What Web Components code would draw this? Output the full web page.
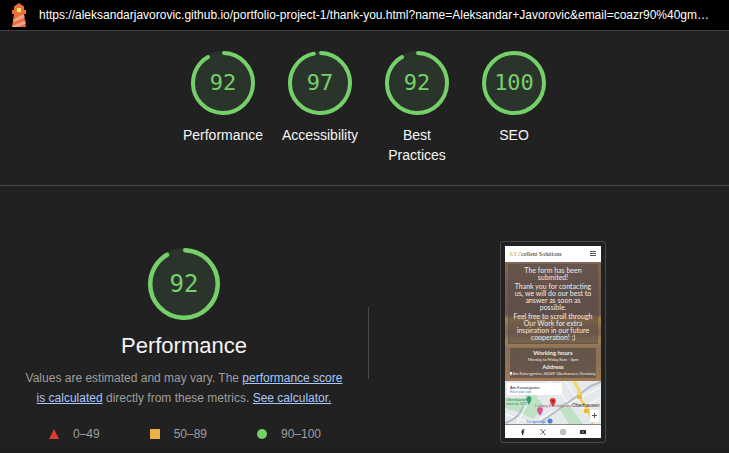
<!DOCTYPE html>
<html lang="en">
<head>
<meta charset="utf-8">
<title>Lighthouse Report</title>
<style>
html{background:#212121}
body{margin:0;background:#212121;color:#f5f5f5;font-family:"Liberation Sans",Arial,sans-serif;font-size:14px;line-height:20px}
</style>
</head>
<body>
<lh-report></lh-report>
<script>
const define = (name, html, setup) => customElements.define(name, class extends HTMLElement {
  connectedCallback() {
    if (this.shadowRoot) return;
    const t = document.createElement('template');
    t.innerHTML = html;
    this.attachShadow({mode: 'open'}).append(t.content.cloneNode(true));
    if (setup) setup(this, this.shadowRoot);
  }
});

define('lh-topbar', `
<style>
:host{display:flex;align-items:center;height:30px;padding:0 12px 0 8px;background:#000;border-bottom:1px solid #424242;font-size:12px}
svg{flex:none;width:22px;height:26px;margin-right:9px}
a{color:#fff;text-decoration:none;white-space:nowrap;overflow:hidden;text-overflow:ellipsis;min-width:0}
</style>
<svg viewBox="0 0 22 26" aria-hidden="true">
<path fill="#e8703c" d="M11 1l5 3.500V8h2v4h-2l2 13H4l2-13H4V8h2V4.500z"/>
<path fill="#f0a385" d="M5.600 17.500L14 13h2.200l.3 2.600L5.200 20.500zM4.400 24l12.800-5.500.4 3.200L10 25H4z"/>
<path fill="#ffe75c" d="M9 6h4v4H9z"/>
</svg>
<a href="https://aleksandarjavorovic.github.io/portfolio-project-1/thank-you.html"><slot></slot></a>`);

define('lh-gauge', `
<style>
:host{display:flex;flex-direction:column;align-items:center;width:81px;text-align:center;color:#f5f5f5}
.dial{display:grid;place-items:center;width:64px;height:64px;color:#75d06a;font:22px/28px "DejaVu Sans Mono",monospace}
.dial>*{grid-area:1/1}
svg{width:100%;height:100%}
circle{fill:#2b342b}
.arc{fill:none;stroke:#75d06a;stroke-linecap:round}
.label{margin-top:10px}
:host([large]){width:auto}
:host([large]) .dial{width:72px;height:72px;font-size:24px}
:host([large]) .label{margin-top:12px;font-size:22px;line-height:28px}
</style>
<div class="dial"><svg viewBox="0 0 64 64" aria-hidden="true"><circle cx="32" cy="32" r="32"/><circle class="arc" cx="32" cy="32" r="30" stroke-width="4"/></svg><span class="score"></span></div>
<div class="label"><slot></slot></div>`, (host, root) => {
  const score = +host.getAttribute('score');
  root.querySelector('.score').textContent = score;
  const arc = root.querySelector('.arc');
  const full = 2 * Math.PI * 30;
  if (score < 100) {
    arc.setAttribute('stroke-dasharray', `${full * score / 100 - 2} ${full}`);
    arc.setAttribute('transform', 'rotate(-88 32 32)');
  }
});

define('lh-legend', `
<style>
:host{display:flex;justify-content:space-between;padding:0 23px 0 25px;font-size:12px;line-height:20px;color:#9e9e9e}
span{display:flex;align-items:center;gap:14px}
svg{width:10px;height:10px}
</style>
<span><svg viewBox="0 0 10 10"><path fill="#db3b36" d="M5 0l5 10H0z"/></svg>0–49</span>
<span><svg viewBox="0 0 10 10"><path fill="#eab04a" d="M0 0h10v10H0z"/></svg>50–89</span>
<span><svg viewBox="0 0 10 10"><circle cx="5" cy="5" r="5" fill="#75d06a"/></svg>90–100</span>`);

define('phone-preview', `
<style>
:host{display:block;width:96px;padding:4px;border:1px solid #484848;border-radius:3px;color:#f0ebe8;font-family:Lato,sans-serif}
header{display:flex;justify-content:space-between;align-items:center;height:16px;padding:0 5px 0 4px;background:#fff;color:#222;font:6px/8px "Liberation Serif",serif}
header i{color:#d2a95a;font-style:normal}
header svg{width:6px;height:6px}
main{display:flex;flex-direction:column;padding:2px 3px 3px;background:linear-gradient(#806657,#705b50 25%,#6b5850 44%,#a5834e 48%,#8a6d52 55%,#806957 60%,#a08355 66%,#8c7058 73%,#8c7058 84%,#a07a56)}
.message{padding:2px 0;background:#55484488;border:1px solid #5c504a88;text-align:center;font-size:7px;line-height:7px}
p{margin:0}
p+p{margin-top:2px}
.hours{margin:4px 2px 0;padding:1px 0;background:#4d444199;text-align:center;font-size:4px;line-height:7px;white-space:nowrap}
.hours b{display:block;font-size:6px}
.pin{width:2px;height:4px;vertical-align:middle}
.map{display:block;width:96px;height:43px}
footer{display:flex;justify-content:space-around;align-items:center;height:13px;padding:0 8px;background:#fff;border-top:1px solid #888}
footer svg{width:6px;height:6px}
</style>
<header><span><i>XYZ</i>cellent Solutions</span><svg viewBox="0 0 6 6"><path stroke="#555" d="M0 .5h6M0 2.500h6M0 4.500h6"/></svg></header>
<main>
<div class="message"><p>The form has been<br>submited!</p><p>Thank you for contacting<br>us, we will do our best to<br>answer as soon as<br>possible.</p><p>Feel free to scroll through<br>Our Work for extra<br>inspiration in our future<br>cooperation! :)</p></div>
<div class="hours"><b>Working hours</b>Monday to Friday 8am - 4pm<b>Address</b><svg class="pin" viewBox="0 0 2 4"><path fill="#fff" d="M1 4L0 1.500V0h2v1.500z"/></svg>Am Kaisergarten, 46049 Oberhausen, Germany</div>
</main>
<svg class="map" viewBox="0 0 96 43" font-family="Liberation Sans, sans-serif">
<path fill="#e6e9ec" d="M0 0h96v43H0z"/>
<path fill="#bfe2c5" d="M0 17h32l8 9-12 12-12-6L0 27zM52 24l10-3 16 22H64zM20 14h12v8H20z"/>
<path fill="none" stroke="#fff" d="M0 33l30 10M45 0l20 24M60 0l30 43M34 38L96 6M76 28l20-12M12 43l10-20"/>
<path fill="none" stroke="#b4bcc4" stroke-width="2" d="M0 42q14-4 18-17M36 41l28-20 22-16 10-4"/>
<path fill="none" stroke="#f5d568" stroke-width="3" d="M69 0l5 9 1 9 8 11 5 14"/>
<path fill="#fff" d="M2 2h55v12H2zM85 29h9v12h-9z"/>
<path fill="none" stroke="#555" d="M87 34.500h5M89.500 32v5"/>
<path fill="#e9b932" d="M72 14h5v4h-5zM79 28h5v4h-5z"/>
<text x="5" y="8" font-size="4" fill="#222">Am Kaisergarten</text>
<text x="5" y="12" font-size="3" fill="#4b83d7">Route plan login</text>
<text x="1" y="20" font-size="4" fill="#248553">Oberhausen</text>
<text x="1" y="24" font-size="3" fill="#248553">nature loc 1873</text>
<text x="30" y="26" font-size="4" fill="#c14b8b">Ludwig Kaisergarten</text>
<text x="67" y="26" font-size="5" fill="#222">Oberhausen</text>
<text x="21" y="42" font-size="4" fill="#4275c8">Tiergehege</text>
<path fill="#3b9a66" d="M24 24q-5-8 0-9 5 1 0 9z"/>
<path fill="#d55396" d="M35 35q-6-8 0-9 6 1 0 9z"/>
<path fill="#df3430" d="M48 26q-6-8-1-9 7 0 1 9z"/><circle cx="48" cy="20" r="1" fill="#8d1d18"/>
<circle cx="45" cy="40" r="2.500" fill="#4a7dda"/>
</svg>
<footer>
<svg viewBox="0 0 6 6"><path fill="#222" d="M2 6V3.500H1v-1h1V1.500Q2 0 4.500.2v1Q3.300 1 3.300 2v.5h1.200l-.2 1h-1V6z"/></svg>
<svg viewBox="0 0 6 6"><path fill="none" stroke="#444" stroke-width=".8" d="M1 .5l4 5M5.500.5l-5 5M.5.5h1.200M4.500 5.500h1"/></svg>
<svg viewBox="0 0 6 6"><rect x=".7" y=".7" width="4.600" height="4.600" rx="1.200" fill="none" stroke="#777" stroke-width=".8"/><circle cx="3" cy="3" r="1" fill="none" stroke="#777" stroke-width=".7"/></svg>
<svg viewBox="0 0 6 6"><rect y="1" width="6" height="4" rx="1" fill="#222"/><path fill="#fff" d="M2.400 2v2l1.600-1z"/></svg>
</footer>`);

define('lh-report', `
<style>
:host{display:block}
.scores{display:flex;justify-content:center;gap:16px;padding:20px 16px 20px 24px;border-bottom:1px solid #484848}
.detail{display:grid;grid-template-columns:1fr 1px 1fr;gap:24px;align-items:start;padding:55px 16px 5px 24px}
.rule{align-self:center;height:72px;background:#484848}
.summary{display:flex;flex-direction:column;gap:8px;padding-top:7px}
p{margin:0;text-align:center;font-size:12px;line-height:20px;color:#9e9e9e}
a{color:#a8c7fa}
lh-legend{margin-top:8px}
phone-preview{justify-self:center}
footer{height:5px;background:#1d1d1d}
</style>
<lh-topbar>https://aleksandarjavorovic.github.io/portfolio-project-1/thank-you.html?name=Aleksandar+Javorovic&amp;email=coazr90%40gm…</lh-topbar>
<section class="scores"><lh-gauge score="92">Performance</lh-gauge><lh-gauge score="97">Accessibility</lh-gauge><lh-gauge score="92">Best Practices</lh-gauge><lh-gauge score="100">SEO</lh-gauge></section>
<section class="detail">
<div class="summary"><lh-gauge large score="92">Performance</lh-gauge><p>Values are estimated and may vary. The <a href="#score">performance score is calculated</a> directly from these metrics. <a href="#calculator">See calculator.</a></p><lh-legend></lh-legend></div>
<div class="rule"></div>
<phone-preview></phone-preview>
</section>
<footer></footer>`);
</script>
</body>
</html>
